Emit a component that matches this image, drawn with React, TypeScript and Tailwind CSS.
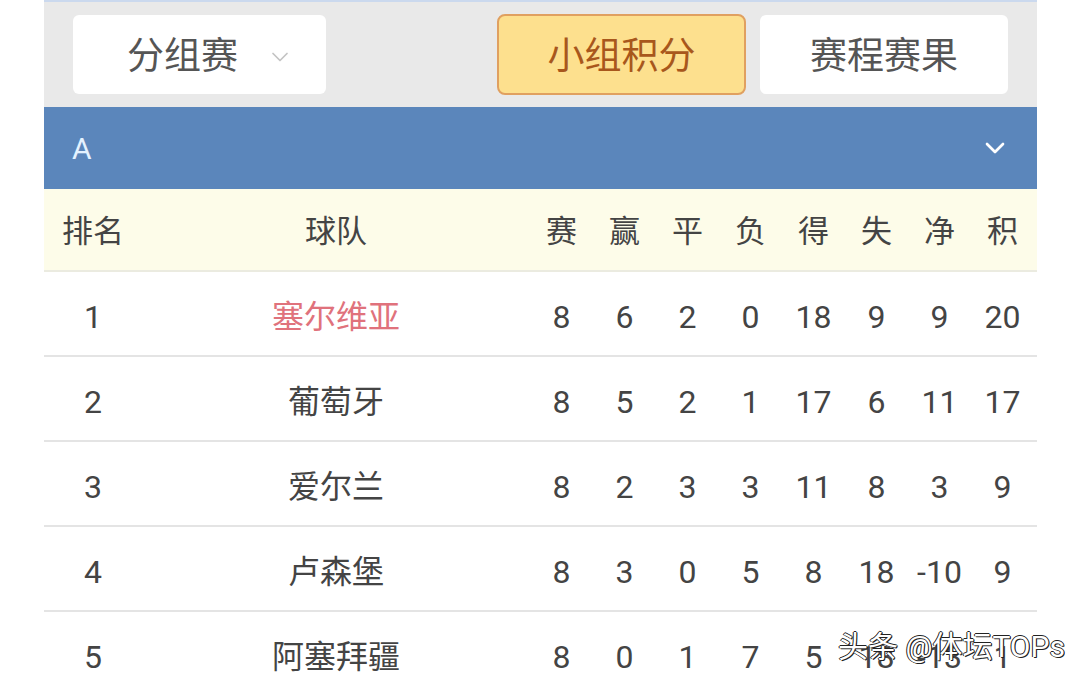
import { ChevronDown } from 'lucide-react';

// 小组积分榜 (A组)

interface TeamRow {
  rank: number;
  name: string;
  stats: (number | string)[];
  highlight?: boolean;
}

const HEADERS = ['赛', '赢', '平', '负', '得', '失', '净', '积'];

const ROWS: TeamRow[] = [
  { rank: 1, name: '塞尔维亚', stats: [8, 6, 2, 0, 18, 9, 9, 20], highlight: true },
  { rank: 2, name: '葡萄牙', stats: [8, 5, 2, 1, 17, 6, 11, 17] },
  { rank: 3, name: '爱尔兰', stats: [8, 2, 3, 3, 11, 8, 3, 9] },
  { rank: 4, name: '卢森堡', stats: [8, 3, 0, 5, 8, 18, -10, 9] },
  { rank: 5, name: '阿塞拜疆', stats: [8, 0, 1, 7, 5, 18, -13, 1] },
];

const GRID = 'grid grid-cols-[98px_388px_repeat(8,63px)] items-center';

export default function App() {
  return (
    <div className="relative h-[679px] w-[1080px] overflow-hidden bg-white pl-[44px] font-['Roboto','Noto_Sans_CJK_SC',sans-serif]">
      <div className="w-[993px]">
        {/* 1. 顶部切换按钮 */}
        <div className="flex h-[107px] items-center gap-[14px] border-t-2 border-[#cbd9ee] bg-[#e9e9e9] px-[29px]">
          <button className="mr-[157px] flex h-[79px] w-[253px] items-center gap-[28px] rounded-md bg-white pt-1 pl-[54px] text-[37px] text-[#555]">
            <span>分组赛</span>
            <ChevronDown className="h-7 w-7 text-[#c4c4c4]" strokeWidth={1.5} />
          </button>
          <button className="flex h-[81px] w-[249px] items-center justify-center rounded-lg border-2 border-[#e0a060] bg-[#fde08e] pt-1 text-[37px] text-[#a8571c]">
            小组积分
          </button>
          <button className="flex h-[79px] w-[248px] items-center justify-center rounded-md bg-white pt-1 text-[37px] text-[#555]">
            赛程赛果
          </button>
        </div>

        {/* 2. 组别标题 */}
        <div className="flex h-[82px] items-center justify-between bg-[#5b86bb] pr-[26px] pl-[28px]">
          <span className="text-[30px] text-[#e4f2ff]">A</span>
          <ChevronDown className="h-8 w-8 text-white" strokeWidth={2} />
        </div>

        {/* 3. 表头 */}
        <div className={`${GRID} h-[83px] border-b-2 border-[#ebebe0] bg-[#fdfce9] pt-1.5 text-[31px] text-[#444]`}>
          <span className="text-center">排名</span>
          <span className="text-center">球队</span>
          {HEADERS.map((h) => (
            <span key={h} className="text-center">
              {h}
            </span>
          ))}
        </div>

        {/* 4. 积分行 */}
        {ROWS.map((row) => (
          <div
            key={row.rank}
            className={`${GRID} h-[85px] border-b-2 border-[#e4e4e4] pt-1.5 text-[32px] text-[#444]`}
          >
            <span className="text-center">{row.rank}</span>
            <span
              className={`text-center text-[32px] ${row.highlight ? 'text-[#e0727c]' : 'text-[#444]'}`}
            >
              {row.name}
            </span>
            {row.stats.map((v, i) => (
              <span key={i} className="text-center">
                {v}
              </span>
            ))}
          </div>
        ))}
      </div>

      {/* 水印 */}
      <div className="absolute top-[624px] left-[838px] text-[30px] whitespace-nowrap text-white [text-shadow:1px_1px_0_#222,-1px_0_0_#222,0_-1px_0_#222,1px_0_0_#222]">
        头条 @体坛TOPs
      </div>
    </div>
  );
}
